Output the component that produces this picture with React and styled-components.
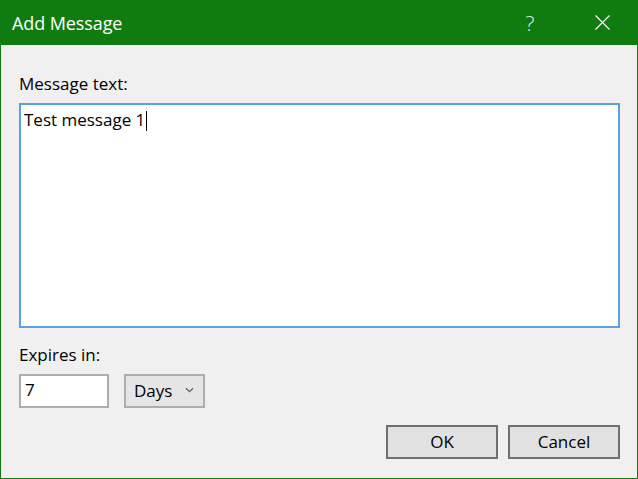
import React from 'react';
import styled, { createGlobalStyle } from 'styled-components';

const GREEN = '#107c10';

const GlobalStyle = createGlobalStyle`
  html, body {
    margin: 0;
    padding: 0;
    background: #f0f0f0;
  }
  body {
    font-family: "Open Sans", "Noto Sans", sans-serif;
    color: #000;
  }
`;

const Window = styled.div`
  width: 638px;
  height: 479px;
  box-sizing: border-box;
  border: 1px solid ${GREEN};
  border-top: none;
  background: #f0f0f0;
  display: flex;
  flex-direction: column;
`;

const TitleBar = styled.div`
  height: 45px;
  background: ${GREEN};
  display: flex;
  align-items: center;
  color: #fff;
  flex-shrink: 0;
`;

const Title = styled.div`
  flex: 1;
  padding-left: 11px;
  font-size: 18px;
  letter-spacing: -0.1px;
`;

const TitleButton = styled.div`
  width: ${(p) => p.$w}px;
  height: 45px;
  display: flex;
  align-items: center;
  justify-content: center;
  font-size: 21px;
  font-weight: 300;
  color: #e8f2e8;
`;

const Content = styled.div`
  flex: 1;
  padding: 27px 17px 0 18px;
  display: flex;
  flex-direction: column;
`;

const Label = styled.div`
  font-size: 17px;
  line-height: 23px;
  margin-bottom: ${(p) => p.$gap}px;
`;

const TextArea = styled.div`
  width: 601px;
  height: 225px;
  box-sizing: border-box;
  border: 2px solid #5c9fe6;
  background: #fff;
  padding: 2px 3px;
  font-size: 17px;
  line-height: 25px;
  margin-bottom: 15px;
`;

const Caret = styled.span`
  display: inline-block;
  width: 1px;
  height: 20px;
  background: #000;
  vertical-align: -5px;
  margin-left: 1px;
`;

const ExpiresRow = styled.div`
  display: flex;
  gap: 15px;
`;

const NumberInput = styled.div`
  width: 90px;
  height: 34px;
  box-sizing: border-box;
  border: 2px solid #adadad;
  background: #fff;
  padding: 0 4px;
  font-size: 17px;
  line-height: 28px;
`;

const Select = styled.div`
  width: 81px;
  height: 34px;
  box-sizing: border-box;
  border: 2px solid #adadad;
  background: #e5e5e5;
  display: flex;
  align-items: center;
  justify-content: space-between;
  padding: 0 9px 2px 8px;
  font-size: 17px;
`;

const Footer = styled.div`
  display: flex;
  justify-content: flex-end;
  gap: 10px;
  margin-top: 17px;
`;

const Button = styled.div`
  width: 112px;
  height: 34px;
  box-sizing: border-box;
  border: 2px solid #707070;
  background: #e1e1e1;
  display: flex;
  align-items: center;
  justify-content: center;
  font-size: 17px;
  padding-bottom: 2px;
`;

const Chevron = () => (
  <svg width="9" height="6" viewBox="0 0 9 6">
    <path d="M1 1.2 L4.5 4.6 L8 1.2" fill="none" stroke="#606060" strokeWidth="1.3" />
  </svg>
);

const CloseIcon = () => (
  <svg width="15" height="15" viewBox="0 0 15 15">
    <path d="M0.5 0.5 L14.5 14.5 M14.5 0.5 L0.5 14.5" stroke="#fff" strokeWidth="1.2" />
  </svg>
);

export default function App() {
  return (
    <>
      <GlobalStyle />
      <Window>
        <TitleBar>
          <Title>Add Message</Title>
          <TitleButton $w={46}>?</TitleButton>
          <TitleButton $w={26} />
          <TitleButton $w={46}>
            <CloseIcon />
          </TitleButton>
          <TitleButton $w={12} />
        </TitleBar>
        <Content>
          <Label $gap={8}>Message text:</Label>
          <TextArea>
            Test message 1<Caret />
          </TextArea>
          <Label $gap={8}>Expires in:</Label>
          <ExpiresRow>
            <NumberInput>7</NumberInput>
            <Select>
              <span>Days</span>
              <Chevron />
            </Select>
          </ExpiresRow>
          <Footer>
            <Button>OK</Button>
            <Button>Cancel</Button>
          </Footer>
        </Content>
      </Window>
    </>
  );
}
